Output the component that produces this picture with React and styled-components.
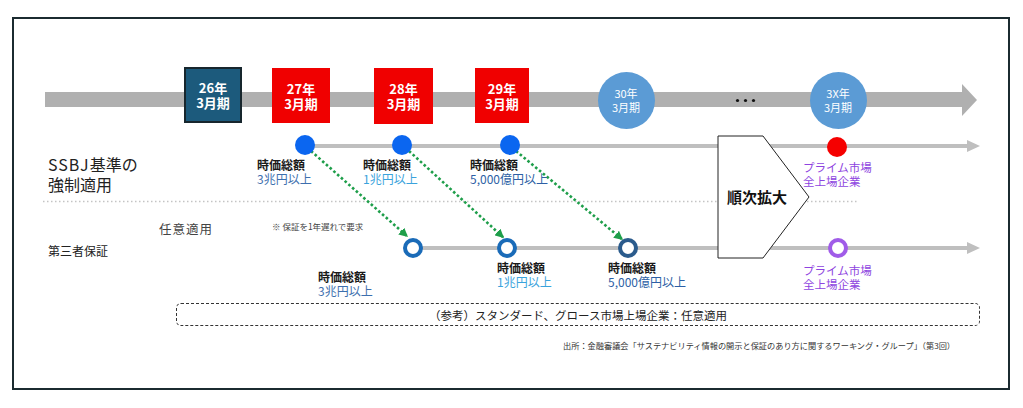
import React from 'react';
import styled, { createGlobalStyle } from 'styled-components';

const OX = 14;
const OY = 19;
const FONT = `"Noto Sans CJK JP", "Noto Sans", sans-serif`;

const Global = createGlobalStyle`
  html, body { margin: 0; padding: 0; background: #fff; }
  body { font-family: ${FONT}; color: #222; }
`;

const Page = styled.div`
  width: 1023px;
  height: 408px;
  padding: 17px 0 0 12px;
  box-sizing: border-box;
`;

const Frame = styled.div`
  width: 998px;
  height: 373px;
  border: 2px solid #1b2b30;
  box-sizing: border-box;
  display: flex;
  flex-direction: column;
`;

const Diagram = styled.div`
  position: relative;
  height: 284px;
  flex: none;
`;

const Overlay = styled.svg`
  position: absolute;
  left: 0;
  top: 0;
  display: block;
`;

const PeriodBox = styled.div`
  position: absolute;
  left: ${(p) => p.$x - OX}px;
  top: ${(p) => p.$y - OY}px;
  width: ${(p) => p.$w}px;
  height: ${(p) => p.$h}px;
  box-sizing: border-box;
  background: ${(p) => (p.$current ? '#1c5a7c' : '#f00000')};
  border: ${(p) => (p.$current ? '2px solid #17262d' : 'none')};
  color: #fff;
  font-size: 13px;
  font-weight: 700;
  line-height: 15px;
  display: flex;
  flex-direction: column;
  align-items: center;
  justify-content: center;
  text-align: center;
`;

const PeriodCircle = styled.div`
  position: absolute;
  left: ${(p) => p.$cx - 28.5 - OX}px;
  top: ${(p) => p.$cy - 28.5 - OY}px;
  width: 57px;
  height: 57px;
  border-radius: 50%;
  background: #5b9bd5;
  color: #fff;
  font-size: 11px;
  line-height: 14px;
  display: flex;
  flex-direction: column;
  align-items: center;
  justify-content: center;
`;

const Dot = styled.div`
  position: absolute;
  left: ${(p) => p.$cx - 10 - OX}px;
  top: ${(p) => p.$cy - 10 - OY}px;
  width: 20px;
  height: 20px;
  border-radius: 50%;
  background: ${(p) => p.$color};
`;

const Ring = styled.div`
  position: absolute;
  left: ${(p) => p.$cx - 10 - OX}px;
  top: ${(p) => p.$cy - 10 - OY}px;
  width: 20px;
  height: 20px;
  box-sizing: border-box;
  border-radius: 50%;
  background: #fff;
  border: 4px solid ${(p) => p.$color};
`;

const Label = styled.div`
  position: absolute;
  left: ${(p) => p.$x - OX}px;
  top: ${(p) => p.$y - 7 - OY}px;
  font-size: ${(p) => p.$size || 12}px;
  line-height: 14px;
  white-space: nowrap;
  display: flex;
  flex-direction: column;
`;

const LabelHead = styled.div`
  font-weight: 700;
  color: #1a1a1a;
  height: 14px;
`;

const LabelValue = styled.div`
  color: ${(p) => p.$color};
  height: 14px;
`;

const RowTitle = styled.div`
  position: absolute;
  left: ${(p) => p.$x - OX}px;
  top: ${(p) => p.$y - p.$lh / 2 - OY}px;
  font-size: ${(p) => p.$size}px;
  line-height: ${(p) => p.$lh}px;
  letter-spacing: ${(p) => p.$ls || 0}px;
  color: ${(p) => p.$color || '#222'};
  white-space: nowrap;
`;

const Latin = styled.span`
  letter-spacing: 1px;
`;

const ExpandText = styled.div`
  position: absolute;
  left: ${727 - OX}px;
  top: ${197 - 10 - OY}px;
  font-size: 15px;
  line-height: 20px;
  font-weight: 700;
  color: #111;
  white-space: nowrap;
`;

const NoteBox = styled.div`
  margin-left: ${176 - OX}px;
  width: 804px;
  height: 23px;
  box-sizing: border-box;
  border: 1px dashed #333;
  border-radius: 5px;
  display: flex;
  align-items: center;
  justify-content: center;
  font-size: 11.5px;
  color: #222;
  flex: none;
`;

const Source = styled.div`
  margin-top: 14px;
  padding-left: ${563 - OX}px;
  font-size: 8.2px;
  line-height: 10px;
  color: #333;
  white-space: nowrap;
`;

const GRAY = '#b0b0b0';
const LINE = '#bfbfbf';
const GREEN = '#1e9e4a';

const boxes = [
  { x: 184, y: 67, w: 58, h: 56, year: '26年', current: true },
  { x: 272, y: 68, w: 58, h: 55, year: '27年' },
  { x: 374, y: 68, w: 59, h: 56, year: '28年' },
  { x: 475, y: 68, w: 54, h: 55, year: '29年' },
];

const mandatory = [
  { x: 257, y: 165, value: '3兆円以上', color: '#3d6fae' },
  { x: 363, y: 165, value: '1兆円以上', color: '#3aa3dc' },
  { x: 470, y: 165, value: '5,000億円以上', color: '#2d5fa5' },
];

const assurance = [
  { x: 318, y: 277, value: '3兆円以上', color: '#3d6fae' },
  { x: 497, y: 268, value: '1兆円以上', color: '#3aa3dc' },
  { x: 608, y: 268, value: '5,000億円以上', color: '#2d5fa5' },
];

const greens = [
  [311, 151, 408, 237],
  [409, 151, 504, 238],
  [516, 151, 623, 240],
];

export default function App() {
  return (
    <>
      <Global />
      <Page>
        <Frame>
          <Diagram>
            <Overlay width="994" height="284" viewBox={`${OX} ${OY} 994 284`}>
              <defs>
                <marker
                  id="gh"
                  markerUnits="userSpaceOnUse"
                  markerWidth="10"
                  markerHeight="9"
                  refX="9"
                  refY="4.5"
                  orient="auto"
                >
                  <path d="M0,0 L9,4.5 L0,9 z" fill={GREEN} />
                </marker>
              </defs>
              <rect x="45" y="92" width="918" height="15" fill={GRAY} />
              <polygon points="962,84 977,100 962,116" fill={GRAY} />
              <circle cx="737.5" cy="100.5" r="1.6" fill="#111" />
              <circle cx="745.5" cy="100.5" r="1.6" fill="#111" />
              <circle cx="753.5" cy="100.5" r="1.6" fill="#111" />

              <line x1="305" y1="146" x2="968" y2="146" stroke={LINE} strokeWidth="4" />
              <polygon points="967,140 980,146 967,152" fill={LINE} />

              <line x1="413" y1="248" x2="968" y2="248" stroke={LINE} strokeWidth="4" />
              <polygon points="967,242 980,248 967,254" fill={LINE} />

              <line
                x1="43"
                y1="201.5"
                x2="858"
                y2="201.5"
                stroke="#c4c4c4"
                strokeWidth="1.3"
                strokeDasharray="1.5 2.5"
              />

              <polygon
                points="718,136 763,136 809,197 763,258 718,258"
                fill="#fff"
                stroke="#222"
                strokeWidth="1"
              />

              {greens.map(([x1, y1, x2, y2], i) => (
                <line
                  key={i}
                  x1={x1}
                  y1={y1}
                  x2={x2}
                  y2={y2}
                  stroke={GREEN}
                  strokeWidth="2.6"
                  strokeDasharray="2.6 2.4"
                  markerEnd="url(#gh)"
                />
              ))}
            </Overlay>

            {boxes.map((b) => (
              <PeriodBox key={b.year} $x={b.x} $y={b.y} $w={b.w} $h={b.h} $current={b.current}>
                <span>{b.year}</span>
                <span>3月期</span>
              </PeriodBox>
            ))}
            <PeriodCircle $cx={626} $cy={100}>
              <span>30年</span>
              <span>3月期</span>
            </PeriodCircle>
            <PeriodCircle $cx={838} $cy={100}>
              <span>3X年</span>
              <span>3月期</span>
            </PeriodCircle>

            <RowTitle $x={48} $y={164} $size={16} $lh={20}>
              <Latin>SSBJ</Latin>基準の
              <br />
              強制適用
            </RowTitle>
            <RowTitle $x={159} $y={229} $size={12.5} $lh={16} $ls={1} $color="#444">
              任意適用
            </RowTitle>
            <RowTitle $x={272} $y={226} $size={8.5} $lh={12} $color="#444">
              ※ 保証を1年遅れで要求
            </RowTitle>
            <RowTitle $x={48} $y={251} $size={12} $lh={16}>
              第三者保証
            </RowTitle>

            <Dot $cx={305} $cy={145} $color="#0b66f0" />
            <Dot $cx={402} $cy={145} $color="#0b66f0" />
            <Dot $cx={510} $cy={145} $color="#0b66f0" />
            <Dot $cx={837} $cy={147} $color="#f50000" />

            <Ring $cx={413} $cy={248} $color="#1a6bb8" />
            <Ring $cx={507} $cy={248} $color="#1a6bb8" />
            <Ring $cx={628} $cy={248} $color="#2b5b8c" />
            <Ring $cx={838} $cy={248} $color="#a05ce8" />

            {mandatory.map((l) => (
              <Label key={l.x} $x={l.x} $y={l.y}>
                <LabelHead>時価総額</LabelHead>
                <LabelValue $color={l.color}>{l.value}</LabelValue>
              </Label>
            ))}
            {assurance.map((l) => (
              <Label key={l.x} $x={l.x} $y={l.y}>
                <LabelHead>時価総額</LabelHead>
                <LabelValue $color={l.color}>{l.value}</LabelValue>
              </Label>
            ))}

            <Label $x={803} $y={167} $size={11.5}>
              <LabelValue $color="#8e44e0">プライム市場</LabelValue>
              <LabelValue $color="#8e44e0">全上場企業</LabelValue>
            </Label>
            <Label $x={803} $y={270} $size={11.5}>
              <LabelValue $color="#8e44e0">プライム市場</LabelValue>
              <LabelValue $color="#8e44e0">全上場企業</LabelValue>
            </Label>

            <ExpandText>順次拡大</ExpandText>
          </Diagram>
          <NoteBox>（参考）スタンダード、グロース市場上場企業：任意適用</NoteBox>
          <Source>出所：金融審議会「サステナビリティ情報の開示と保証のあり方に関するワーキング・グループ」（第3回）</Source>
        </Frame>
      </Page>
    </>
  );
}
